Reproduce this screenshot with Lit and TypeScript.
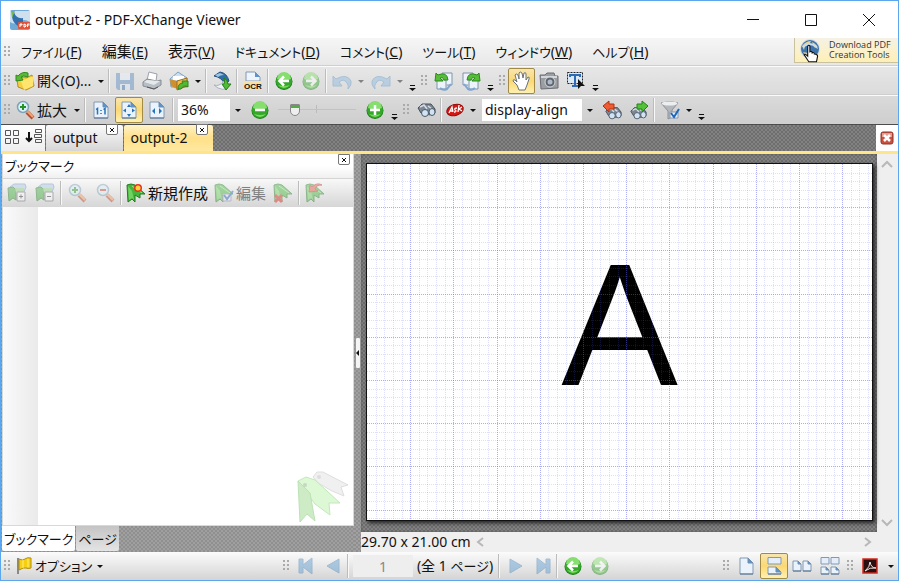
import { LitElement, html, css, svg, nothing } from "lit";
import { customElement, property } from "lit/decorators.js";

const page = (x: number, y: number, w: number, h: number) => {
  const f = w > 10 ? 5 : 3;
  return svg`
  <path d=${`M${x} ${y}h${w - f}l${f} ${f}v${h - f}h${-w}z`} fill="#eaf2fb" stroke="#8299b3"/>
  <path d=${`M${x + w - f} ${y}v${f}h${f}z`} fill="#5c93cc" stroke="#6f8fb2"/>
  <path d=${`M${x} ${y + h}h${w}`} stroke="#5b728e"/>`;
};

const lens = (sign: unknown) => svg`
  <path d="M12 12l6 6" stroke="#b9492c" stroke-width="4"/>
  <path d="M12 11l6 6" stroke="#f3a56b" stroke-width="2"/>
  <circle cx="8" cy="7" r="5.5" fill="#d9f0f8" stroke="#7fa3b8" stroke-width="1.5"/>${sign}`;

const ribbon = svg`
  <path d="M1 2l4-1 4 1 10 9-5 0 0 4-5-3 0 7-3-3-4 3z" fill="#44b63c" stroke="#237a20"/>
  <path d="M2 3l4 5 2 9-2-2-3 2z" fill="#71d35f"/>
  <path d="M6 3l10 7" stroke="#9be88a"/>`;

const binoc = svg`
  <path d="M2 8l4-4 4 0 5 0 4 5 0 4-6 2-4-3-4 1z" fill="#7c8794" stroke="#46505c"/>
  <path d="M4 7l4-2 3 4M12 6l4 3" stroke="#d5dbe2" stroke-width="1.5" fill="none"/>
  <ellipse cx="9" cy="13" rx="3.5" ry="3.5" fill="#cfe3f5" stroke="#4c5866"/>
  <ellipse cx="16" cy="12" rx="3" ry="3.5" fill="#cfe3f5" stroke="#4c5866"/>`;

const ball = (mark: unknown) => svg`
  <circle cx="10" cy="10.5" r="8.5" fill="#1f7d1c"/>
  <circle cx="10" cy="10" r="8" fill="#35a82b"/>
  <path d="M3 8a7 7 0 0 1 14 0q-7 3-14 0z" fill="#86de6e"/>
  <path d="M4 14q6 6 12 0-6 2-12 0z" fill="#7ade5a"/>
  <g fill="none" stroke="#fff" stroke-width="2.5">${mark}</g>`;

const left = svg`<path d="M15 10H6M10 5.500L5.500 10l4.500 4.500"/>`;
const right = svg`<path d="M5 10h9M10 5.500l4.500 4.500-4.500 4.500"/>`;
const undo = svg`<path d="M1 5v10h9l-3-4q5-4 8 1 2 2 1 6 4-4 3-8-4-8-15-2z" fill="#8bbbe2" stroke="#6699c5"/>`;
const stack = svg`<path d="M8 2h10v12h-5M3 9h9v9H3z" fill="#edf3fa" stroke="#7e94ad"/><path d="M6 17q3 3 7 1l4-5" stroke="#7fa6cf" stroke-width="2" fill="none"/>`;
const turn = svg`<path d="M1 10l1-8 2 2q9-4 10 5l-4 0q-1-4-4-2l3 3z" fill="#56bd37" stroke="#2a8a1c"/>`;
const tree = (sign: string) => svg`
  <path d="M3 4l4-3h11l1 3-2 5" fill="#a9c8ea" stroke="#7693b5"/>
  <path d="M1 5l5-1 3 3v10l-3-2-4 3z" fill="#3fae3a" stroke="#237a20"/><path d="M8 5h9v5H9z" fill="#8dcf7e"/>
  <path d="M10 9h8v9h-8z" fill="#fff" stroke="#667"/><path d=${sign} stroke="#333" fill="none"/>`;

const ICONS: Record<string, unknown> = {
  app: svg`<rect width="20" height="20" rx="2" fill="#6fa9d8"/><path d="M0 1h20v11q-7-4-10 0-5 3-10 0z" fill="#cfdfee"/>
    <path d="M4 2q2 7 9 6v6h3q-4 3-8 2-5-3-6-9z" fill="#3270ad"/><path d="M1 1h4L2 8z" fill="#76b756"/>
    <rect x="8" y="12" width="12" height="7" rx="1" fill="#e0533b"/><path d="M10 17v-3h2v1h-2M14 14v3h1l1-1v-1zM17.500 17v-3h2M17.500 15h2" stroke="#fff" fill="none"/>`,
  open: svg`<path d="M2 8l7-2 2 1 6-3 2 11-8 4-8-3z" fill="#f4cf3f" stroke="#b98c16"/><path d="M6 10l13-5-1 10-9 4z" fill="#ffe56e"/>
    <path d="M1 10V4l2 1q4-5 10-3v4q-5-2-7 0l2 3z" fill="#59bb35" stroke="#2f8a1b"/>`,
  save: svg`<path d="M1 2h18v17H3l-2-2z" fill="#5a8cc2"/><path d="M5 2h10v7H5z" fill="#e9f1fa"/><path d="M5 13h10v6H5z" fill="#dbe8f5"/><path d="M7 14h3v5H7z" fill="#3a6ea8"/>`,
  print: svg`<path d="M5 9l2-8 8 2-1 7z" fill="#fff" stroke="#98a2ad"/><path d="M1 11l4-3 10 2 4-1v5l-7 4-11-3z" fill="#b9bec4" stroke="#858c94"/>
    <path d="M2 11l3-2 13 1-6 4z" fill="#e6e9ec"/><path d="M5 16l7 2 4-2" stroke="#4f565d" fill="none"/>`,
  box: svg`<path d="M1 8l8-7 9 6v9H2z" fill="#c9dff2" stroke="#7fa0c0"/><path d="M4 5h11v4H4z" fill="#fff"/><path d="M1 8l7 2v8l-6-3z" fill="#cf902a"/><path d="M8 10l10-3v8l-10 4z" fill="#f1bd51" stroke="#a06a15"/>
    <path d="M9 18q0-6 5-6l-1-2h6v6l-2-1q-3-1-5 3z" fill="#52b936" stroke="#2c861a"/>`,
  scan: svg`<path d="M2 5l6-4q7 1 9 9l-4 3q-4-7-11-8z" fill="#2f6da8" stroke="#24517e"/><path d="M3 4l5-2 4 2q-4 0-6 2z" fill="#9fc3e3"/>
    <path d="M2 14q5 2 10-4l3 3 0 5q-5 1-9-1z" fill="#eef2f6" stroke="#a7b2be"/><path d="M12 7q4 2 4 6h3l-5 6-4-6h2q1-3 0-6z" fill="#4fbb35" stroke="#277f18"/>`,
  ocr: svg`<path d="M3 1h9l5 5v4H3z" fill="#eef4fb" stroke="#8299b3"/><path d="M12 1v5h5z" fill="#5c93cc"/><rect x="1" y="10" width="18" height="9" fill="#f7dfa6"/>
    <text x="10" y="17.500" text-anchor="middle" font-size="8" font-weight="700" font-family="Liberation Sans, sans-serif" fill="#111">OCR</text>`,
  back: ball(left),
  fwd: ball(right),
  minus: ball(svg`<path d="M5 10h10"/>`),
  plus: ball(svg`<path d="M5 10h10M10 5v10"/>`),
  undo,
  redo: svg`<g transform="matrix(-1 0 0 1 20 0)">${undo}</g>`,
  rotl: svg`${stack}${turn}`,
  rotr: svg`<g transform="matrix(-1 0 0 1 20 0)">${stack}${turn}</g>`,
  hand: svg`<path d="M7 19l-2-5-4-4q0-2 2-1l2 2-2-7q1-2 3 0l1 4V2q1-2 3 0l1 5 1-5q2-1 2 1l0 6 2-3q2 0 1 2l-2 6-2 5z" fill="#fff" stroke="#6b727c"/>`,
  camera: svg`<path d="M1 4h5l2-2h7l1 3h3v12l-17 1z" fill="#9b9fa4" stroke="#696d72"/><path d="M2 5h16v2H2z" fill="#d4d7da"/><circle cx="11" cy="11" r="5" fill="#5f656c" stroke="#d6d9dd"/><circle cx="11" cy="11" r="2.5" fill="#aebac7"/>`,
  select: svg`<path d="M1.500 1.500h15v11h-15z" fill="#dce8f5" stroke="#222" stroke-dasharray="2 1"/><path d="M4 6V4h10v2M9 4v11M6 15h6" fill="none" stroke="#2f68b5" stroke-width="2"/><path d="M12 8l7 7h-4l-3 3z" fill="#111"/>`,
  zoomin: lens(svg`<path d="M5 7h6M8 4v6" stroke="#259325" stroke-width="2"/>`),
  zoomout: lens(svg`<path d="M5 7h6" stroke="#d1372b" stroke-width="2"/>`),
  actual: svg`${page(3, 2, 14, 16)}<path d="M5 9.500l1.500-1v6M10 10v1M10 13v1M12.500 9.500l1.500-1v6" stroke="#2572bd" stroke-width="1.5" fill="none"/>`,
  fitpage: svg`${page(3, 2, 14, 16)}<path d="M10 4l2 3H8zM10 17l2-3H8zM4 10.500l3-2v4zM16 10.500l-3-2v4z" fill="#2572bd"/>`,
  fitwidth: svg`${page(3, 2, 14, 16)}<path d="M5 11l3-3v6zM15 11l-3-3v6z" fill="#2572bd"/>`,
  find: binoc,
  ask: svg`<ellipse cx="10" cy="10" rx="8.5" ry="5.5" transform="rotate(-18 10 10)" fill="#d8150f" stroke="#8e0c08"/>
    <path d="M4 13l3-6 1 5M5 11h3M12 8q-3 0-2 2 2 1 0 2H9M14 5l-1 7M17 7l-3 2 3 2" stroke="#fff" fill="none" stroke-width="1.3"/>`,
  prevfind: svg`<g transform="translate(2 4) scale(.9)">${binoc}</g><path d="M1 6l6-5v3h5v5H7v3z" fill="#ef5b32" stroke="#b3300f"/>`,
  nextfind: svg`<g transform="translate(0 4) scale(.9)">${binoc}</g><path d="M19 6l-6-5v3H8v5h5v3z" fill="#53c238" stroke="#25821a"/>`,
  filter: svg`<path d="M1 3q9-3 17 0l-6 7v7l-4 2v-8z" fill="#b4b8bd" stroke="#8d9298"/><ellipse cx="9.5" cy="3.5" rx="8" ry="2" fill="#eceef0"/><path d="M10 12h8v6h-8z" fill="#eaf2fb" stroke="#8299b3"/><path d="M11 13l3 4 5-8" stroke="#1e66b8" stroke-width="2" fill="none"/>`,
  expand: tree("M12 13.500h4M14 11.500v4"),
  collapse: tree("M12 13.500h4"),
  newmark: svg`${ribbon}<circle cx="12" cy="5" r="4" fill="#e53222"/><circle cx="12" cy="5" r="2.5" fill="#ffd338"/>`,
  editmark: svg`${ribbon}<path d="M9 11h8v7H9z" fill="#e6f0fb" stroke="#88a"/><path d="M10 12l3 4 6-8" stroke="#2264b8" stroke-width="2" fill="none"/>`,
  delmark: svg`${ribbon}<path d="M2 12l7 7M9 12l-7 7" stroke="#d8261c" stroke-width="3"/>`,
  goto: svg`${ribbon}<path d="M4 9l1-7 2 2q5-5 10-2-6 0-7 4l3 2z" fill="#e25540" stroke="#b3301d"/>`,
  flag: svg`<path d="M4 2v16" stroke="#888" stroke-width="2"/><path d="M5 3q4 2 6 0t6-1v10q-3 1-5 0t-7 2z" fill="#f6cf12" stroke="#b18c0a"/><path d="M9 4v8M14 3v8" stroke="#fff07a"/>`,
  first: svg`<path d="M3 3h4v6l9-7v16l-9-7v6H3z" fill="#5b9bd2" stroke="#4a84b8"/>`,
  prev: svg`<path d="M16 3v14L4 10z" fill="#5b9bd2" stroke="#4a84b8"/>`,
  next: svg`<path d="M5 3v14l12-7z" fill="#5b9bd2" stroke="#4a84b8"/>`,
  last: svg`<path d="M18 3h-4v6L5 2v16l9-7v6h4z" fill="#5b9bd2" stroke="#4a84b8"/>`,
  single: page(4, 2, 13, 16),
  continuous: svg`<path d="M4 1.500h13V8H4z" fill="#e3eefa" stroke="#8299b3"/>${page(4, 11, 13, 7)}`,
  facing: svg`${page(1, 5, 8, 10)}${page(11, 5, 8, 10)}`,
  facingcont: svg`<path d="M1 1.500h8V8H1zM11 1.500h8V8h-8z" fill="#e3eefa" stroke="#8299b3"/>${page(1, 11, 8, 7)}${page(11, 11, 8, 7)}`,
  acrobat: svg`<rect x="3" y="3" width="14" height="14" fill="#2b0f0e" stroke="#d3281d" stroke-width="1.5"/><path d="M5 15q5-4 5-9 1 6 6 6-6-1-11 3z" stroke="#f0e6e6" fill="none"/>`,
  grid4: svg`<path d="M3.500 3.500h5v5h-5zM11.500 3.500h5v5h-5zM3.500 11.500h5v5h-5zM11.500 11.500h5v5h-5z" fill="none" stroke="#555"/>`,
  sort: svg`<path d="M5 5v9M2 11l3 3 3-3" fill="none" stroke="#111" stroke-width="2"/><path d="M11.500 2.500h6v3h-6zM10.500 7.500h7v3h-7zM11.500 12.500h6v3h-6z" fill="none" stroke="#555"/>`,
  globe: svg`<circle cx="10" cy="9" r="10" fill="#d5dde5"/><circle cx="10" cy="9" r="9" fill="#3d74ab"/><path d="M2 6q4-5 9-5l-2 4-4 1-1 4zM12 2q5 2 6 7l-4-2zM3 12l5 1-1 4z" fill="#e8d193"/><path d="M3 7q6-6 14 0" stroke="#c9def2" fill="none" stroke-width="2"/>
    <g transform="translate(0 3) scale(1.1)"><path d="M8 17l-4-6q0-2 3 1V3q1-2 2 0v5q2-1 2 1 2-1 2 1 3 0 3 2l-1 5z" fill="#fff" stroke="#111"/></g>`,
  closedoc: svg`<rect x="4" y="4" width="12" height="12" rx="2" fill="#cb5140" stroke="#8e3428"/><rect x="5" y="5" width="10" height="4" fill="#e39c8d"/><path d="M7 7l6 6M13 7l-6 6" stroke="#fff" stroke-width="2.5"/>`,
  min: svg`<path d="M4 9.500h12" stroke="#111"/>`,
  max: svg`<path d="M4.500 4.500h11v11h-11z" stroke="#111" fill="none"/>`,
  close: svg`<path d="M4 4l12 12M16 4L4 16" stroke="#111"/>`,
  smallx: svg`<path d="M6 6l8 8M14 6l-8 8" stroke="#111" stroke-width="2"/>`,
  up: svg`<path d="M5 13l5-5 5 5" fill="none" stroke="#b8b8b8" stroke-width="2"/>`,
  down: svg`<path d="M5 8l5 5 5-5" fill="none" stroke="#b8b8b8" stroke-width="2"/>`,
  lt: svg`<path d="M12 6l-5 4 5 4" fill="none" stroke="#b8b8b8" stroke-width="2"/>`,
  gt: svg`<path d="M8 6l5 4-5 4" fill="none" stroke="#b8b8b8" stroke-width="2"/>`,
  caret: svg`<path d="M7 9h6l-3 3z" fill="#111"/>`,
  more: svg`<path d="M8 14h5v1H8zM7 17h7l-3.500 3z" fill="#111"/>`,
};

const base = css`
  * { box-sizing: border-box; }
  button, input {
    margin: 0; padding: 0; border: 0; background: none; color: inherit;
    font: inherit; font-feature-settings: inherit; outline: 0; border-radius: 0;
  }
`;

@customElement("x-icon")
export class XIcon extends LitElement {
  @property() name = "";
  static styles = css`
    :host { display: block; width: 20px; height: 20px; flex: none; }
    svg { display: block; width: 100%; height: 100%; overflow: visible; }
  `;
  render() {
    return html`<svg viewBox="0 0 20 20" aria-hidden="true">${ICONS[this.name]}</svg>`;
  }
}

/** Dotted ruling drawn over the page: one heavy line per inch, four light ones between. */
@customElement("page-grid")
export class PageGrid extends LitElement {
  static styles = css`
    :host { display: block; overflow: hidden; }
    svg { display: block; width: 100%; height: 100%; }
    path { fill: none; stroke: #5a5af5; stroke-width: 1px; stroke-dasharray: 1 1; opacity: 0.2; }
    .inch { opacity: 0.5; }
  `;
  private lines(inches: boolean) {
    return Array.from({ length: 300 }, (_, i) => i + 1)
      .filter((i) => (i % 5 === 0) === inches)
      .map((i) => Math.round((i * 43.2) / 5) + 0.5)
      .map((p) => `M${p} 0V2600M0 ${p}H2600`)
      .join("");
  }
  render() {
    return html`<svg aria-hidden="true"><path d=${this.lines(false)}/><path class="inch" d=${this.lines(true)}/></svg>`;
  }
}

@customElement("app-root")
export class AppRoot extends LitElement {
  static styles = [base, css`
    :host {
      display: flex; flex-direction: column; height: 100vh; box-sizing: border-box;
      border: 1px solid #5aa7ee; background: #fff; color: #111; overflow: hidden;
      font: 14px/20px "Noto Sans", "Noto Sans CJK JP", sans-serif;
      font-feature-settings: "palt";
    }
    .title { display: flex; align-items: center; height: 37px; padding-left: 9px; flex: none; }
    .title h1 { flex: 1; margin: 0 0 0 5px; font-size: 14px; font-weight: 400; }
    .win { width: 58px; height: 36px; display: grid; place-items: center; }

    .chrome { flex: none; background: linear-gradient(#f6f6f6, #e6e6e6 35%, #cecece); }
    .row { display: flex; align-items: center; height: 29px; border-top: 1px solid #fbfbfb; border-bottom: 1px solid #cfcfcf; }
    .menu { gap: 20px; height: 28px; border-top: 0; }
    .menu .grip { margin-right: -12px; }
    .menu button { white-space: nowrap; }
    .kana { font-size: 13px; }
    .kanji { font-size: 15px; }
    .promo {
      margin-left: auto; align-self: flex-start; display: flex; align-items: center; gap: 9px;
      width: 104px; height: 25px; padding-left: 5px; color: #333; text-decoration: none;
      font: 500 9px/10px "Open Sans", sans-serif; white-space: nowrap;
      background: linear-gradient(#f5f2e6, #ffefb5); border: 1px solid #c9c2a0; border-width: 0 0 1px 1px;
    }

    .grip {
      width: 12px; height: 12px; flex: none;
      background: radial-gradient(circle at 1px 1px, #aaa 1px, #fff0 1px) 3px 0 / 4px 4px no-repeat,
        radial-gradient(circle at 1px 1px, #aaa 1px, #fff0 1px) 7px 0 / 4px 4px no-repeat,
        radial-gradient(circle at 1px 1px, #aaa 1px, #fff0 1px) 3px 4px / 4px 4px no-repeat,
        radial-gradient(circle at 1px 1px, #aaa 1px, #fff0 1px) 7px 4px / 4px 4px no-repeat,
        radial-gradient(circle at 1px 1px, #aaa 1px, #fff0 1px) 3px 8px / 4px 4px no-repeat,
        radial-gradient(circle at 1px 1px, #aaa 1px, #fff0 1px) 7px 8px / 4px 4px no-repeat;
    }
    .sep { width: 4px; height: 24px; flex: none; background: linear-gradient(90deg, #fff0 1px, #bcbcbc 1px 2px, #f8f8f8 2px 3px, #fff0 3px); }
    .btn { display: flex; align-items: center; justify-content: center; width: 27px; height: 26px; flex: none; white-space: nowrap; }
    .wide .btn, .views .btn { width: 28px; }
    .btn:disabled x-icon { opacity: 0.45; }
    .btn:disabled { color: #808080; }
    .btn.drop { width: 12px; }
    .btn.combo { width: 16px; }
    .btn.tight { width: 24px; }
    .btn.text { width: auto; gap: 2px; padding: 0 3px; }
    .btn.openbtn { width: 82px; justify-content: flex-start; padding: 0 2px; }
    .btn.zoombtn { width: 58px; justify-content: flex-start; padding: 0 2px; }
    .on, .wide .on, .views .on { border: 1px solid #a08a46; border-radius: 2px; background: linear-gradient(#f8e6b0, #fbd874 50%, #fff0b0); }
    .group { display: flex; align-items: center; }
    .field { height: 22px; margin-left: 3px; padding: 0 3px; background: #fff; flex: none; }
    .zoomfield { width: 52px; }
    .findfield { width: 100px; }
    .pagefield { width: 60px; text-align: center; color: #888; background: #eee; }
    .slider { width: 78px; margin: 0 5px; height: 20px; appearance: none; background: linear-gradient(#c2c2c2, #c2c2c2) 0 9px / 100% 1px no-repeat, linear-gradient(#bbb, #bbb) 38px 5px / 1px 8px no-repeat; }
    .slider::-webkit-slider-thumb { appearance: none; width: 10px; height: 12px; background: linear-gradient(#58a84c 3px, #eee 3px); border: 1px solid #888; border-radius: 1px 1px 5px 5px; }

    .dark { background: repeating-conic-gradient(#6e6e6e 0 25%, #828282 0 50%) 0 0 / 4px 4px; }
    .mid { background: repeating-conic-gradient(#8f8f8f 0 25%, #a0a0a0 0 50%) 0 0 / 4px 4px; }
    .tabs { display: flex; height: 30px; flex: none; border-top: 1px solid #4c4c4c; border-bottom: 3px solid #ffe48b; }
    .corner { display: flex; align-items: center; justify-content: space-between; width: 44px; padding: 0 1px; background: linear-gradient(#fff, #eee); }
    .corner x-icon { margin-bottom: 3px; }
    .tab { position: relative; margin-left: 1px; padding: 3px 25px 0 7px; height: 26px; background: linear-gradient(#fafafa, #d6d6d6); border-radius: 2px 2px 0 0; white-space: nowrap; }
    .tab.cur { background: linear-gradient(#fff3c8, #ffe08a 50%, #ffe9a0); }
    .xbox { width: 12px; height: 11px; border: 1px solid #777; border-radius: 0 0 2px 2px; background: #fff; display: grid; place-items: center; }
    .xbox x-icon { width: 10px; height: 10px; }
    .tab .xbox { position: absolute; top: -1px; right: 5px; }
    .closedoc { margin-left: auto; width: 22px; background: #fff; display: grid; place-items: center; }

    .main { flex: 1; display: flex; min-height: 0; }
    .side { width: 353px; flex: none; display: flex; flex-direction: column; padding-left: 1px; }
    .panel { flex: 1; display: flex; flex-direction: column; background: #fff; border: 1px solid #d8d8d8; border-top: 0; min-height: 0; }
    .head { display: flex; justify-content: space-between; height: 24px; padding: 0 3px 0 2px; flex: none; background: linear-gradient(#fff 50%, #f0f0f0); }
    .head h2 { margin: 2px 0 0; font-size: 13px; font-weight: 400; }
    .tools { display: flex; align-items: center; height: 29px; flex: none; border-top: 1px solid #d4d4d4; background: linear-gradient(#f8f8f8, #d6d6d6); }
    .body { flex: 1; display: flex; justify-content: flex-end; align-items: flex-end; background: linear-gradient(90deg, #fafafa, #eaeaea) 0 0 / 35px 100% no-repeat; }
    .wm { width: 52px; height: 52px; margin: 0 4px 2px 0; }
    .sidetabs { display: flex; height: 26px; flex: none; }
    .sidetabs button { height: 25px; padding: 0 2px; font-size: 13px; margin-right: 1px; background: linear-gradient(#c4c4c4, #e4e4e4); border-radius: 0 0 2px 2px; white-space: nowrap; }
    .sidetabs .cur { background: #fff; }
    .split { width: 7px; flex: none; display: grid; place-items: center; }
    .split button { width: 6px; height: 32px; background: #f4f4f4; border: 1px solid #999; border-radius: 2px; display: grid; place-items: center; }
    .split i { border: 3px solid #fff0; border-right-color: #111; border-left: 0; }
    .view { flex: 1; min-width: 0; display: grid; grid-template: 1fr 20px / 1fr 21px; background: #efefef; }
    .desk { display: grid; padding: 9px 4px 11px 5px; box-shadow: inset 0 0 3px #555; }
    .sheet { display: grid; grid-template: 100% / 100%; background: #fff; border: 1px solid #111; box-shadow: 2px 2px 4px #222; overflow: hidden; }
    .sheet > * { grid-area: 1 / 1; }
    .glyph { margin: 0; place-self: center; padding-bottom: 34px; font: 175px/176px "Liberation Sans", sans-serif; color: #000; }
    .vbar { display: flex; flex-direction: column; justify-content: space-between; }
    .hbar { display: flex; align-items: center; }
    .hbar output { width: 110px; white-space: nowrap; }
    .hbar .end { margin-left: auto; }
    .status { display: flex; align-items: center; height: 28px; flex: none; background: linear-gradient(#fbfbfb, #d4d4d4); }
    .opts { width: 279px; }
    .views { margin-left: auto; }
    .btn.optbtn { padding: 0 0 0 1px; gap: 1px; }
    .btn.endcaret { width: 14px; }
    .total { width: 84px; text-align: center; white-space: nowrap; }
  `];

  private btn(icon: string, label: string, cls = "", disabled = false, text: unknown = nothing) {
    return html`<button class="btn ${cls}" aria-label=${label} ?disabled=${disabled}><x-icon name=${icon}></x-icon>${text}</button>`;
  }
  private sep = () => html`<span class="sep"></span>`;
  private grip = () => html`<span class="grip"></span>`;
  private drop = (cls = "drop", disabled = false) => this.btn("caret", "メニュー", cls, disabled);
  private more = () => this.btn("more", "その他", "drop");

  render() {
    const menus = [["ファイル", "F", "kana"], ["編集", "E", "kanji"], ["表示", "V", "kanji"], ["ドキュメント", "D", "kana"],
      ["コメント", "C", "kana"], ["ツール", "T", "kana"], ["ウィンドウ", "W", "kana"], ["ヘルプ", "H", "kana"]];
    const { sep, grip } = this;
    return html`
      <header class="title">
        <x-icon name="app"></x-icon><h1>output-2 - PDF-XChange Viewer</h1>
        ${["min", "max", "close"].map((n) => html`<button class="win" aria-label=${n}><x-icon name=${n}></x-icon></button>`)}
      </header>
      <div class="chrome">
        <nav class="row menu">${grip()}
          ${menus.map(([name, key, cls]) => html`<button><span class=${cls}>${name}</span>(<u>${key}</u>)</button>`)}
          <a class="promo" href="#download"><x-icon name="globe"></x-icon><span>Download PDF<br>Creation Tools</span></a>
        </nav>
        <div class="row">${grip()}
          ${this.btn("open", "開く", "text openbtn", false, html`<span>開く(O)...</span>`)}${this.drop()}${sep()}
          ${this.btn("save", "保存", "", true)}${this.btn("print", "印刷")}${this.btn("box", "送信")}${this.drop()}${sep()}
          ${this.btn("scan", "スキャン")}${sep()}${this.btn("ocr", "OCR")}${sep()}
          ${this.btn("back", "戻る")}${this.btn("fwd", "進む", "", true)}${sep()}
          ${this.btn("undo", "元に戻す", "", true)}${this.drop("drop", true)}${this.btn("redo", "やり直す", "", true)}${this.drop("drop", true)}${this.more()}
          ${grip()}${this.btn("rotl", "左回転")}${this.btn("rotr", "右回転")}${this.more()}
          ${grip()}${this.btn("hand", "手のひら", "on")}${this.btn("camera", "スナップショット")}${this.btn("select", "選択")}${this.more()}
        </div>
        <div class="row">${grip()}
          ${this.btn("zoomin", "拡大", "text zoombtn", false, html`<span class="kanji">拡大</span>`)}${this.drop()}${sep()}
          <div class="group wide">${this.btn("actual", "実寸")}${this.btn("fitpage", "全体", "on")}${this.btn("fitwidth", "幅")}</div>${sep()}
          <input class="field zoomfield" aria-label="倍率" value="36%">${this.drop("combo")}
          ${this.btn("minus", "縮小")}<input class="slider" type="range" aria-label="倍率" min="0" max="100" value="18">${this.btn("plus", "拡大")}${this.more()}
          ${grip()}${this.btn("find", "検索")}${sep()}${this.btn("ask", "Ask", "tight")}${this.drop()}
          <input class="field findfield" aria-label="検索語" value="display-align">${this.drop("combo")}
          ${this.btn("prevfind", "前を検索")}${this.btn("nextfind", "次を検索")}${sep()}${this.btn("filter", "フィルター")}${this.drop()}${this.more()}
        </div>
      </div>
      <div class="tabs dark">
        <div class="corner"><x-icon name="grid4"></x-icon><x-icon name="sort"></x-icon></div>
        ${["output", "output-2"].map((t, i) => html`<div class="tab ${i ? "cur" : ""}"><button>${t}</button><button class="xbox" aria-label="閉じる"><x-icon name="smallx"></x-icon></button></div>`)}
        <button class="closedoc" aria-label="文書を閉じる"><x-icon name="closedoc"></x-icon></button>
      </div>
      <main class="main">
        <aside class="side mid">
          <section class="panel">
            <div class="head"><h2>ブックマーク</h2><button class="xbox" aria-label="閉じる"><x-icon name="smallx"></x-icon></button></div>
            <div class="tools wide">
              ${this.btn("expand", "展開", "", true)}${this.btn("collapse", "折りたたむ", "", true)}${sep()}
              ${this.btn("zoomin", "拡大", "", true)}${this.btn("zoomout", "縮小", "", true)}${sep()}
              ${this.btn("newmark", "新規作成", "text", false, html`<span class="kanji">新規作成</span>`)}
              ${this.btn("editmark", "編集", "text", true, html`<span class="kanji">編集</span>`)}
              ${this.btn("delmark", "削除", "", true)}${sep()}${this.btn("goto", "移動", "", true)}
            </div>
            <div class="body">
              <svg class="wm" viewBox="0 0 52 52" aria-hidden="true">
                <path d="M16 6l4-5 6 0 25 13-7 2 3 9-12-5-14-8z" fill="#f0f0f0" stroke="#dedede"/>
                <path d="M1 10l8-4 9 3 25 23-11 0 1 12-15-11z" fill="#dcf8d4" stroke="#c4e8bb"/>
                <path d="M1 10l12 12 5 28-8-7-7 8z" fill="#cdecc6" stroke="#bde0b5"/>
                <circle cx="8" cy="14" r="2" fill="#c6d8c2"/><circle cx="22" cy="6" r="2" fill="#ddd"/>
              </svg>
            </div>
          </section>
          <div class="sidetabs"><button class="cur">ブックマーク</button><button>ページ</button></div>
        </aside>
        <div class="split mid"><button aria-label="パネルを閉じる"><i></i></button></div>
        <section class="view">
          <div class="desk dark"><div class="sheet"><p class="glyph">A</p><page-grid></page-grid></div></div>
          <div class="vbar"><x-icon name="up"></x-icon><x-icon name="down"></x-icon></div>
          <div class="hbar"><output>29.70 x 21.00 cm</output><x-icon name="lt"></x-icon><x-icon class="end" name="gt"></x-icon></div>
        </section>
      </main>
      <footer class="status">
        <div class="group opts">${grip()}${this.btn("flag", "オプション", "text optbtn", false, html`<span class="kana">オプション</span>`)}${this.drop("combo")}</div>
        <div class="group">${grip()}${this.btn("first", "最初", "", true)}${this.btn("prev", "前", "", true)}${sep()}
          <input class="field pagefield" aria-label="ページ" value="1"><span class="total">(全 1 <span class="kana">ページ</span>)</span>${sep()}
          ${this.btn("next", "次", "", true)}${this.btn("last", "最後", "", true)}${sep()}${this.btn("back", "戻る")}${this.btn("fwd", "進む", "", true)}</div>
        <div class="group views">${grip()}${this.btn("single", "単一")}${this.btn("continuous", "連続", "on")}${this.btn("facing", "見開き")}${this.btn("facingcont", "見開き連続")}
          ${grip()}${this.btn("acrobat", "Acrobat")}${this.drop("endcaret")}</div>
      </footer>`;
  }
}
